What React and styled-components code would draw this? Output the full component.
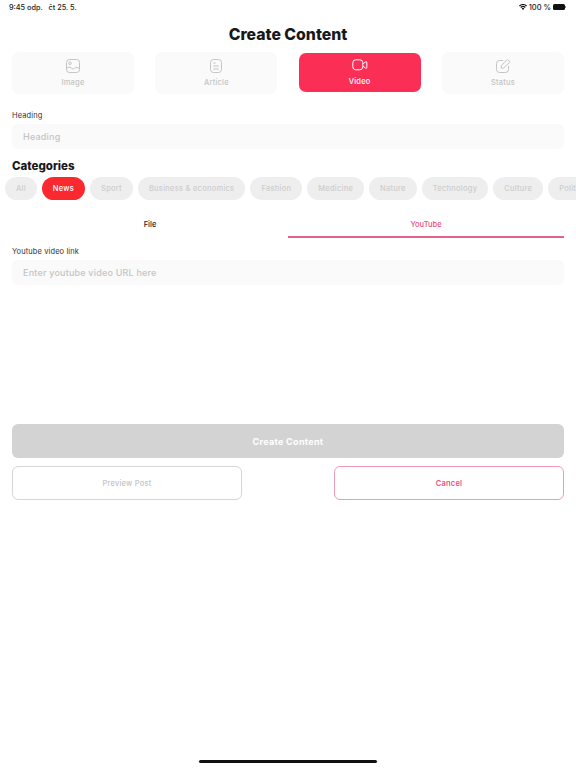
import React from "react";
import styled, { createGlobalStyle } from "styled-components";

const GlobalStyle = createGlobalStyle`
html, body {
  margin: 0;
  padding: 0;
  background: #fff;
  overflow: hidden;
}
* { box-sizing: border-box; }
`;

const types = [
  { label: "Image", icon: <ImageIcon /> },
  { label: "Article", icon: <ArticleIcon /> },
  { label: "Video", icon: <VideoIcon />, active: true },
  { label: "Status", icon: <StatusIcon /> },
];

const categories = ["All", "News", "Sport", "Business & economics", "Fashion", "Medicine", "Nature", "Technology", "Culture", "Politics"];

function ImageIcon() {
  return (
    <svg width="16" height="16" viewBox="0 0 16 16" fill="none" stroke="currentColor" strokeWidth="1">
      <rect x="1.5" y="1.5" width="13" height="13" rx="3" />
      <circle cx="5" cy="5.2" r="1.3" />
      <path d="M1.8 10.5c1.6-1.6 3-1.8 4.4-.6 1.2 1 2 1.7 3.4.4 1.3-1.2 3-1.2 4.9.4" />
    </svg>
  );
}

function ArticleIcon() {
  return (
    <svg width="16" height="16" viewBox="0 0 16 16" fill="none" stroke="currentColor" strokeWidth="1">
      <rect x="2.5" y="1.5" width="11" height="13" rx="3" />
      <path d="M5.2 5h2.4M5.2 8h5.6M5.2 11h5.6" />
    </svg>
  );
}

function VideoIcon() {
  return (
    <svg width="16" height="16" viewBox="0 0 16 16" fill="none" stroke="currentColor" strokeWidth="1">
      <rect x="0.8" y="2.8" width="10" height="10" rx="3" />
      <path d="M10.8 6.8l3-2a.6.6 0 0 1 1 .5v5.4a.6.6 0 0 1-1 .5l-3-2" />
    </svg>
  );
}

function StatusIcon() {
  return (
    <svg width="16" height="16" viewBox="0 0 16 16" fill="none" stroke="currentColor" strokeWidth="1">
      <path d="M8 2.5H4.5a3 3 0 0 0-3 3v6a3 3 0 0 0 3 3h6a3 3 0 0 0 3-3V8" />
      <path d="M6.2 7.8L11.6 2.1a1.2 1.2 0 0 1 1.8 0l.8.8a1.2 1.2 0 0 1 0 1.7L8.6 10H6.2z" />
    </svg>
  );
}

function WifiIcon() {
  return (
    <svg width="8" height="6" viewBox="0 0 16 12" fill="#111">
      <path d="M8 12L5.4 9a3.6 3.6 0 0 1 5.2 0zM4.2 7.8L2.7 6a8 8 0 0 1 10.6 0l-1.5 1.8a5.6 5.6 0 0 0-7.6 0zM1.6 4.8L0 3a12 12 0 0 1 16 0l-1.6 1.8a9.6 9.6 0 0 0-12.8 0z" />
    </svg>
  );
}

export default function App() {
  return (
    <Page>
      <GlobalStyle />
      <StatusBar>
        <span>9:45 odp.&nbsp;&nbsp; čt 25. 5.</span>
        <StatusRight>
          <WifiIcon />
          <span>100 %</span>
          <Battery />
        </StatusRight>
      </StatusBar>

      <Title>Create Content</Title>

      <TypeRow>
        {types.map((t) => (
          <TypeCard key={t.label} $active={t.active}>
            {t.icon}
            <span>{t.label}</span>
          </TypeCard>
        ))}
      </TypeRow>

      <FieldLabel $top={16}>Heading</FieldLabel>
      <Input>Heading</Input>

      <SectionTitle>Categories</SectionTitle>
      <Chips>
        {categories.map((c) => (
          <Chip key={c} $active={c === "News"}>{c}</Chip>
        ))}
      </Chips>

      <Tabs>
        <Tab>File</Tab>
        <Tab $active>YouTube</Tab>
      </Tabs>

      <FieldLabel $top={8}>Youtube video link</FieldLabel>
      <Input>Enter youtube video URL here</Input>

      <SubmitButton>Create Content</SubmitButton>
      <Actions>
        <OutlineButton>Preview Post</OutlineButton>
        <OutlineButton $danger>Cancel</OutlineButton>
      </Actions>

      <HomeBar />
    </Page>
  );
}

const Page = styled.div`
position: relative;
width: 576px;
height: 768px;
padding: 0 12px;
background: #fff;
font-family: Inter, "Liberation Sans", sans-serif;
overflow: hidden;
`;

const StatusBar = styled.div`
height: 14px;
margin: 0 -2px 0 -3px;
display: flex;
align-items: center;
justify-content: space-between;
font-size: 7.3px;
font-weight: 500;
color: #222;
`;

const StatusRight = styled.div`
display: flex;
align-items: center;
gap: 2px;
font-size: 7.5px;
`;

const Battery = styled.div`
position: relative;
width: 12px;
height: 6px;
margin-right: 1px;
background: #111;
border-radius: 1.5px;

&::after {
  content: "";
  position: absolute;
  right: -1px;
  top: 2px;
  width: 1px;
  height: 2px;
  background: #888;
}
`;

const Title = styled.h1`
margin: 10px 0 0;
height: 21px;
line-height: 21px;
text-align: center;
font-size: 15.8px;
font-weight: 800;
color: #18181b;
`;

const TypeRow = styled.div`
margin-top: 7px;
display: flex;
justify-content: space-between;
align-items: center;
`;

const TypeCard = styled.div`
width: 122px;
height: ${(p) => (p.$active ? "39px" : "42px")};
margin-bottom: ${(p) => (p.$active ? "1px" : "0")};
padding-bottom: ${(p) => (p.$active ? "3px" : "2px")};
border-radius: 7px;
background: ${(p) => (p.$active ? "#fb2f55" : "#fafafa")};
color: ${(p) => (p.$active ? "#fff" : "#c4c4c4")};
display: flex;
flex-direction: column;
align-items: center;
justify-content: center;
gap: 4px;
font-size: 7.5px;
font-weight: 500;
letter-spacing: 0.2px;
`;

const FieldLabel = styled.div`
margin-top: ${(p) => p.$top}px;
height: 12px;
line-height: 12px;
font-size: 7.5px;
letter-spacing: 0.1px;
color: #333;
`;

const Input = styled.div`
margin-top: 2px;
height: 25px;
padding: 0 11px;
display: flex;
align-items: center;
border-radius: 6px;
background: #fafafa;
font-size: 9px;
font-weight: 500;
letter-spacing: 0.2px;
color: #c4c4c4;
`;

const SectionTitle = styled.h2`
margin: 10px 0 0;
height: 15px;
line-height: 15px;
font-size: 11.5px;
font-weight: 800;
color: #18181b;
`;

const Chips = styled.div`
margin: 3px -12px 0 -7px;
display: flex;
gap: 5px;
overflow: hidden;
`;

const Chip = styled.div`
flex: none;
height: 23px;
padding: 0 11px;
display: flex;
align-items: center;
border-radius: 12px;
background: ${(p) => (p.$active ? "#f9292f" : "#eeeeee")};
color: ${(p) => (p.$active ? "#fff" : "#cdcdcd")};
font-size: 7.5px;
font-weight: 500;
letter-spacing: 0.25px;
`;

const Tabs = styled.div`
margin-top: 13px;
display: flex;
`;

const Tab = styled.div`
flex: 1;
height: 25px;
display: flex;
align-items: center;
justify-content: center;
font-size: 7.5px;
font-weight: 500;
color: ${(p) => (p.$active ? "#e8507e" : "#222")};
border-bottom: 2px solid ${(p) => (p.$active ? "#e5628a" : "transparent")};
`;

const SubmitButton = styled.div`
margin-top: 139px;
height: 34px;
display: flex;
align-items: center;
justify-content: center;
border-radius: 6px;
background: #d3d3d3;
color: #fff;
font-size: 9px;
font-weight: 700;
letter-spacing: 0.3px;
`;

const Actions = styled.div`
margin-top: 8px;
display: flex;
justify-content: space-between;
`;

const OutlineButton = styled.div`
width: 230px;
height: 34px;
display: flex;
align-items: center;
justify-content: center;
border-radius: 6px;
background: #fff;
border: 1px solid ${(p) => (p.$danger ? "#ef9ab5" : "#d6d6d6")};
color: ${(p) => (p.$danger ? "#e8507e" : "#c4c4c4")};
font-size: 7.5px;
font-weight: ${(p) => (p.$danger ? 600 : 500)};
letter-spacing: 0.2px;
`;

const HomeBar = styled.div`
position: absolute;
left: 199px;
bottom: 5px;
width: 178px;
height: 3px;
border-radius: 2px;
background: #111;
`;
